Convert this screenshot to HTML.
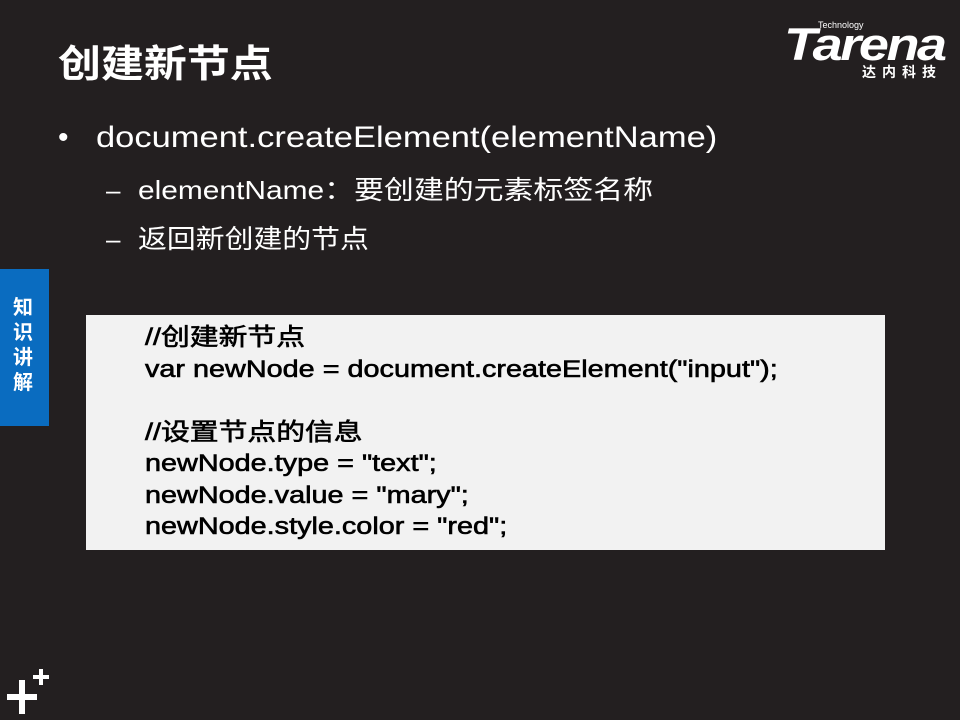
<!DOCTYPE html>
<html><head><meta charset="utf-8"><style>
body{margin:0;width:960px;height:720px;background:#231f20;overflow:hidden;position:relative;font-family:"Liberation Sans","Noto Sans CJK SC",sans-serif;color:#fff}
.a{position:absolute;white-space:nowrap;transform-origin:0 0}
</style></head><body>
<div class="a" style="left:58px;top:40px;font-size:38px;font-weight:bold;line-height:50px;transform:scaleX(1.13)">创建新节点</div>
<div class="a" style="left:784px;top:22px;font-size:45px;font-weight:bold;font-style:italic;letter-spacing:-2px;line-height:46px;transform:scaleX(1.2)">Tarena</div>
<div class="a" style="left:818px;top:20px;font-size:9px;line-height:10px">Technology</div>
<div class="a" style="left:862px;top:64px;font-size:14px;font-weight:bold;letter-spacing:6px;line-height:16px">达内科技</div>
<div class="a" style="left:58px;top:120px;font-size:30px;line-height:36px">•</div>
<div class="a" style="left:96px;top:120px;font-size:30px;line-height:36px;transform:scaleX(1.15)">document.createElement(elementName)</div>
<div class="a" style="left:106px;top:173px;font-size:26px;line-height:34px">–</div>
<div class="a" style="left:138px;top:173px;font-size:26px;line-height:34px;transform:scaleX(1.15)">elementName：要创建的元素标签名称</div>
<div class="a" style="left:106px;top:222px;font-size:26px;line-height:34px">–</div>
<div class="a" style="left:138px;top:222px;font-size:26px;line-height:34px;transform:scaleX(1.11)">返回新创建的节点</div>
<div class="a" style="left:0;top:269px;width:49px;height:157px;background:#0a6cc0"></div>
<div class="a" style="left:13px;top:296px;width:24px;font-size:20px;font-weight:bold;line-height:25px;white-space:normal">知识讲解</div>
<div class="a" style="left:86px;top:315px;width:799px;height:235px;background:#f2f2f2"></div>
<div class="a" style="left:145px;top:322px;font-size:24px;line-height:31.5px;color:#000;-webkit-text-stroke:0.6px #000;transform:scaleX(1.2)">//创建新节点<br>var newNode = document.createElement("input");<br><br>//设置节点的信息<br>newNode.type = "text";<br>newNode.value = "mary";<br>newNode.style.color = "red";</div>
<svg class="a" style="left:0;top:0" width="60" height="720"><path d="M7 694h30v6H7zM19 680h6v34h-6zM33 675h16v4H33zM39 669h4v16h-4z" fill="#fff"/></svg>
</body></html>
